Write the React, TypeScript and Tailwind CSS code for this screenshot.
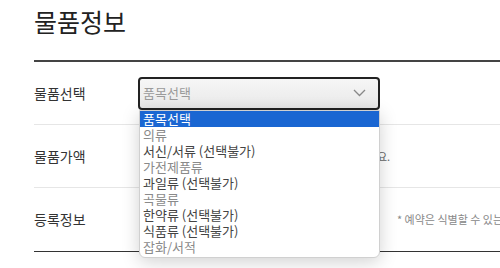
import React from 'react';

const options = [
  { label: '품목선택', tone: 'selected' },
  { label: '의류', tone: 'light' },
  { label: '서신/서류 (선택불가)', tone: 'dark' },
  { label: '가전제품류', tone: 'light' },
  { label: '과일류 (선택불가)', tone: 'dark' },
  { label: '곡물류', tone: 'light' },
  { label: '한약류 (선택불가)', tone: 'dark' },
  { label: '식품류 (선택불가)', tone: 'dark' },
  { label: '잡화/서적', tone: 'light' },
];

export default function App() {
  return (
    <div
      className="relative w-[500px] h-[268px] overflow-hidden bg-white text-[#333]"
      style={{ fontFamily: '"Noto Sans CJK KR", "Noto Sans", sans-serif' }}
    >
      <div className="pl-[34px]">
        <h2 className="h-[60px] pt-[3px] text-[25px] leading-[36px] font-normal text-[#222]">물품정보</h2>
        <div className="border-t-2 border-[#444]">
          <div className="flex items-center h-[63px] border-b border-[#e6e6e6]">
            <div className="w-[104px] shrink-0 text-[14px]">물품선택</div>
            <div className="flex shrink-0 items-center justify-between w-[242px] h-[33px] pl-[3px] pr-[12px] rounded-[4px] border-2 border-[#222] bg-gradient-to-b from-[#f6f6f6] to-[#e9e9e9]">
              <span className="text-[13px] text-[#9a9a9a]">품목선택</span>
              <svg width="13" height="8" viewBox="0 0 13 8" fill="none">
                <path d="M1 1l5.5 5.5L12 1" stroke="#888" strokeWidth="1.3" />
              </svg>
            </div>
          </div>
          <div className="flex items-center h-[63px] border-b border-[#e6e6e6]">
            <div className="w-[104px] shrink-0 text-[14px]">물품가액</div>
            <div className="w-[239px] shrink-0" />
            <span className="text-[11px] text-[#666] whitespace-nowrap">요.</span>
          </div>
          <div className="flex items-center h-[64px] border-b border-[#333]">
            <div className="w-[104px] shrink-0 text-[14px]">등록정보</div>
            <div className="w-[259px] shrink-0" />
            <span className="text-[11px] text-[#888] whitespace-nowrap">* 예약은 식별할 수 있는</span>
          </div>
        </div>
      </div>

      <ul className="absolute left-[139px] top-[110px] w-[241px] bg-white border border-[#d0d0d0] rounded-b-[6px] shadow-[0_4px_18px_rgba(0,0,0,0.18)] pb-[2px]">
        {options.map(o => (
          <li
            key={o.label}
            className={
              o.tone === 'selected'
                ? 'h-[16px] leading-[16px] pl-[3px] text-[13px] bg-[#1a66d2] text-white'
                : o.tone === 'dark'
                ? 'h-[16px] leading-[16px] pl-[3px] text-[13px] text-[#444]'
                : 'h-[16px] leading-[16px] pl-[3px] text-[13px] text-[#8a8a8a]'
            }
          >
            {o.label}
          </li>
        ))}
      </ul>
    </div>
  );
}
